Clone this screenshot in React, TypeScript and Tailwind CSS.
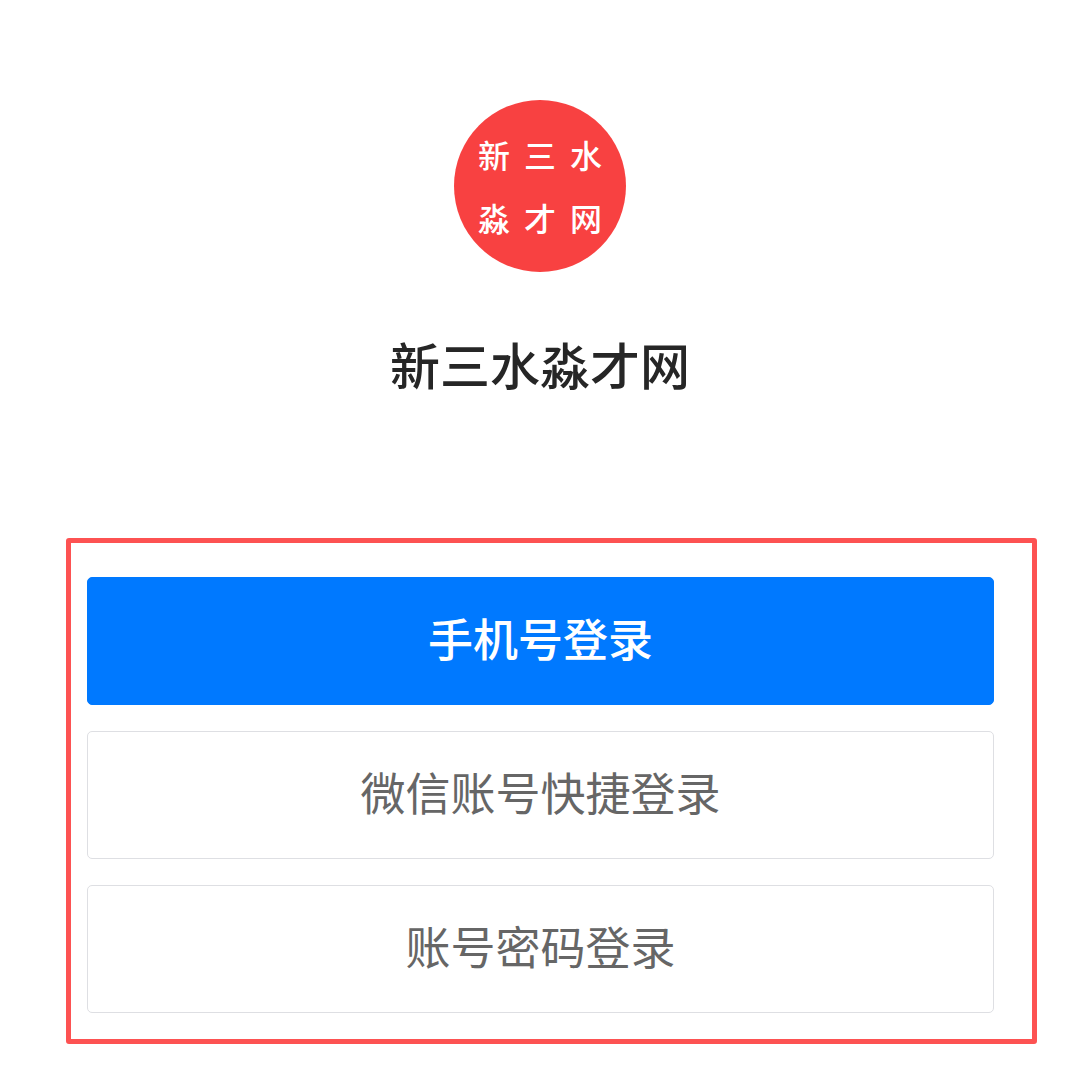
import clsx from "clsx"

const siteName = "新三水淼才网"

const loginOptions = [
  { name: "手机号登录", primary: true },
  { name: "微信账号快捷登录", primary: false },
  { name: "账号密码登录", primary: false },
]

function Logo() {
  return (
    <div className="flex h-[172px] w-[172px] items-center justify-center rounded-full bg-[#f84141]">
      <div className="grid grid-cols-3 text-center text-[32px] leading-[63px] font-medium text-white">
        {siteName.split("").map((char) => (
          <span key={char} className="w-[46px]">
            {char}
          </span>
        ))}
      </div>
    </div>
  )
}

export default function App() {
  return (
    <main className="bg-white pt-[100px] pb-[39px] font-['Noto_Sans_CJK_SC',sans-serif]">
      {/* Brand */}
      <header className="flex flex-col items-center">
        <Logo />
        <h1 className="mt-14 text-[50px] leading-[70px] font-medium text-[#262626]">{siteName}</h1>
      </header>

      {/* Login methods */}
      <section className="mt-[140px] mr-[43px] ml-[66px] flex flex-col gap-[26px] rounded-[3px] border-[5px] border-[#fd5252] pt-[34px] pr-[38px] pb-[26px] pl-4">
        {loginOptions.map((option) => (
          <button
            key={option.name}
            type="button"
            className={clsx(
              "h-32 w-full cursor-pointer rounded-[5px] border pb-2 text-[45px] leading-none",
              option.primary
                ? "border-[#0079ff] bg-[#0079ff] font-medium text-white"
                : "border-[#dedfe3] bg-white font-normal text-[#666666]"
            )}
          >
            {option.name}
          </button>
        ))}
      </section>
    </main>
  )
}
